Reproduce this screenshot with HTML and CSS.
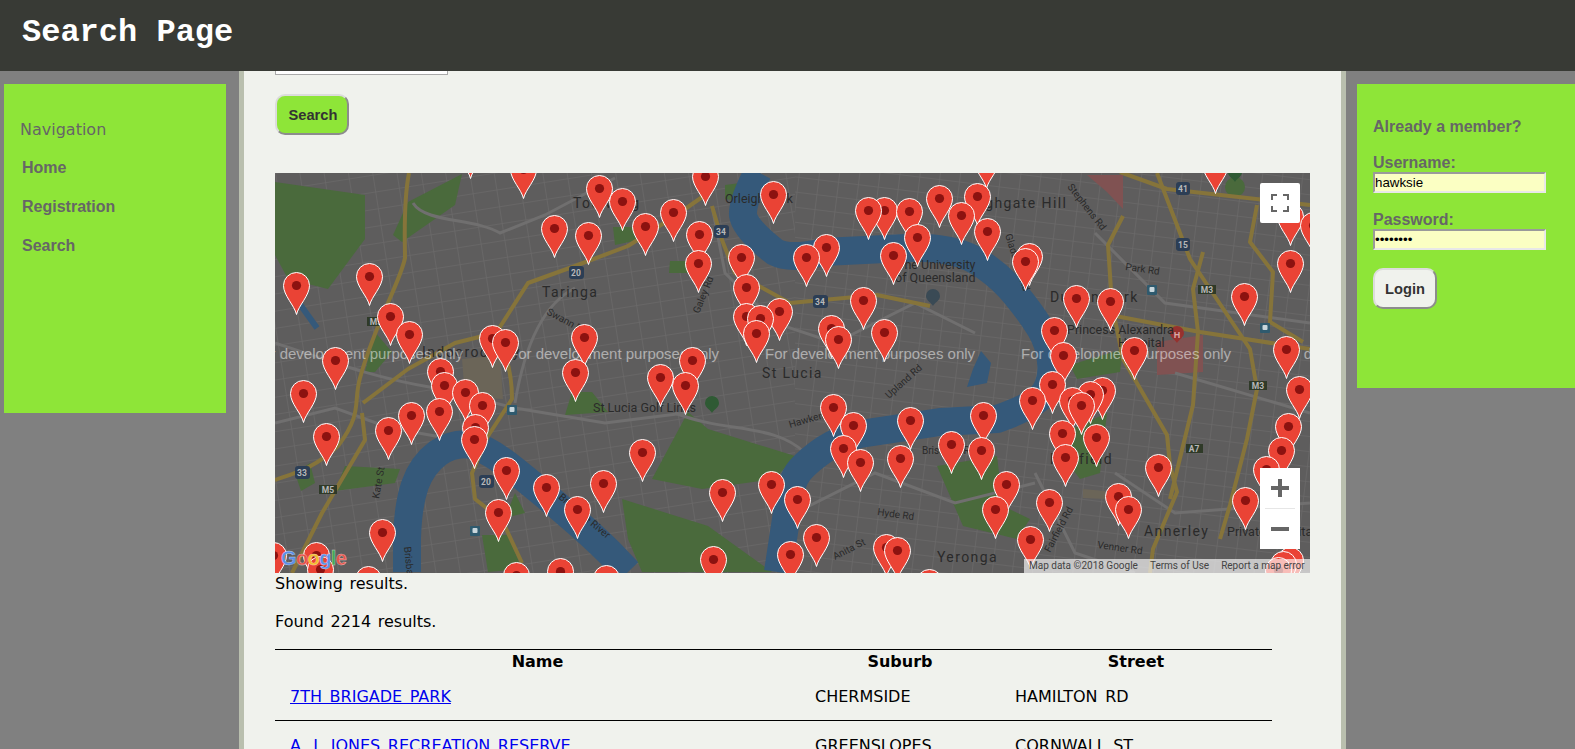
FILE: index.html
```html
<!DOCTYPE html>
<html lang="en">
<head>
    <meta charset="UTF-8">
    <meta name="viewport" content="width=device-width, initial-scale=1.0">
    <title>Search Page</title>
    <link rel="stylesheet" href="styles.css">
</head>
<body>
    <header class="site-header">
        <h1>Search Page</h1>
    </header>

    <div class="page">
        <aside class="side-left">
            <nav class="panel nav-panel">
                <h2>Navigation</h2>
                <a href="#">Home</a>
                <a href="#">Registration</a>
                <a href="#">Search</a>
            </nav>
        </aside>

        <main class="content">
            <div class="search-field"></div>
            <button class="btn btn-search">Search</button>

            <div class="map">
                <svg class="map-canvas" viewBox="0 0 1035 400" width="1035" height="400">
                    <defs>
                        <pattern id="streets-west" width="24" height="17" patternUnits="userSpaceOnUse" patternTransform="rotate(-9)">
                            <path class="street" d="M0,0H24M0,0V17"/>
                        </pattern>
                        <pattern id="streets-east" width="20" height="15" patternUnits="userSpaceOnUse" patternTransform="rotate(7)">
                            <path class="street" d="M0,0H20M0,0V15"/>
                        </pattern>
                        <g id="pin">
                            <path class="pin-body" d="M0,29C-2,20 -13,10 -13,0A13,13 0 0 1 13,0C13,10 2,20 0,29Z"/>
                            <circle class="pin-dot" r="4.6"/>
                        </g>
                        <g id="rail">
                            <rect class="rail" x="-5" y="-5" width="10" height="10" rx="1"/>
                            <rect class="rail-mark" x="-2.5" y="-3" width="5" height="5" rx="1"/>
                        </g>
                        <path id="poi" d="M0,9C-1,6 -7,4 -7,-1A7,7 0 0 1 7,-1C7,4 1,6 0,9Z"/>
                    </defs>

                    <rect class="land" width="1035" height="400"/>
                    <rect width="520" height="400" fill="url(#streets-west)"/>
                    <rect x="520" width="515" height="400" fill="url(#streets-east)"/>

                    <!-- parks -->
                    <path class="park" d="M0,9L90,22V66L53,116L13,106L0,82Z"/>
                    <path class="park" d="M133,29L187,1L180,32L127,69L118,62Z"/>
                    <path class="park" d="M100,159L117,179L100,199L90,199Z"/>
                    <path class="park" d="M290,242L297,219L317,219L333,239Z"/>
                    <path class="park" d="M413,239L377,306L427,316L500,306L520,283L433,256Z"/>
                    <path class="park" d="M347,326L433,353L497,399H367L353,366Z"/>
                    <path class="park" d="M207,362H233L247,396L213,399Z"/>
                    <path class="park" d="M662,293L722,283L728,333L755,346L742,366L688,353Z"/>
                    <path class="park" d="M795,192L848,176L845,199L802,206Z"/>
                    <path class="park" d="M775,266L832,240L825,300L805,306Z"/>
                    <path class="park" d="M338,54H362L368,66L340,72Z"/>
                    <path class="park" d="M395,88H430L425,100H394Z"/>
                    <path class="park" d="M20,300L35,290L40,310L26,318Z"/>
                    <path class="park" d="M70,293L125,296L120,310L60,318Z"/>
                    <path class="park" d="M240,320L250,340L230,345Z"/>
                    <path class="park" d="M450,12L480,8L478,30L450,26Z"/>
                    <circle class="park" cx="960" cy="14" r="10"/>
                    <path class="paved" d="M187,186L225,182L228,226L190,224Z"/>
                    <path class="paved" d="M808,316L830,318V326L808,325Z"/>

                    <!-- hospitals -->
                    <path class="hospital" d="M882,169L928,162V199L882,202Z"/>
                    <path class="hospital" d="M812,2H848V36L832,19Z"/>

                    <!-- minor roads -->
                    <path class="road" d="M138,30C150,50 200,45 225,60L270,42L340,5"/>
                    <path class="road" d="M0,170C60,190 100,205 160,215L240,235L330,250L410,240"/>
                    <path class="road" d="M240,230C250,170 270,130 300,115"/>
                    <path class="road" d="M0,250L60,235L115,255L200,270"/>
                    <path class="road" d="M437,33L450,100L500,150L560,170L640,130L700,160"/>
                    <path class="road" d="M760,300L800,380L860,400"/>
                    <path class="road" d="M520,340L600,300L680,330L760,310"/>
                    <path class="road" d="M820,60L890,130L1035,150"/>
                    <path class="road" d="M900,200L1035,240"/>
                    <path class="road" d="M400,240C450,260 500,250 530,280"/>
                    <path class="road" d="M840,300L900,340L1035,330"/>

                    <!-- river -->
                    <path class="river" d="M132,399L132,365Q133,332 140,312Q147,292 163,280Q180,269 196,272Q213,276 238,296Q263,316 290,339Q317,362 335,380L353,399"/>
                    <path class="river" d="M503,399L513,333Q515,309 525,297Q535,286 550,276Q565,266 585,261L665,249L722,246Q762,232 770,219Q778,206 776,189Q775,172 765,155Q755,139 741,122Q728,106 711,94Q695,82 675,78Q655,74 631,75L548,79Q515,87 500,79Q470,56 468,42Q467,29 483,-1"/>
                    <path class="lake" d="M706,178L716,190L712,210L692,214L698,196Z"/>
                    <path class="lake-thin" d="M24,130L42,155"/>

                    <!-- main roads -->
                    <g class="arterial">
                        <path d="M134,0C128,30 130,70 130,85C125,110 100,150 85,205C78,230 88,240 63,273C40,295 20,300 0,307"/>
                        <path d="M88,230L133,196L180,170L220,160C232,180 237,200 237,226L213,263L197,300L200,326L227,347L247,390"/>
                        <path d="M223,157L253,110L300,93L353,73L400,43L433,20L443,0"/>
                        <path d="M87,240L90,267L47,340L17,400"/>
                        <path d="M437,33L447,67L460,100L515,130L602,122L655,133"/>
                        <path d="M845,-1L892,16L1035,32"/>
                        <path d="M848,43L833,72L837,132L848,186L892,262L895,292L902,319L878,376L875,400"/>
                        <path d="M882,0L915,86L975,176L982,216L972,266L955,332L945,366"/>
                        <path d="M928,79L918,116L923,159L918,232L895,326"/>
                        <path d="M982,32L975,69L998,99L995,149L1028,169"/>
                        <path d="M835,142L925,159L1035,176"/>
                    </g>

                    <!-- road numbers -->
                    <g class="shield-text">
                        <rect class="shield" x="294" y="93" width="15" height="13" rx="3"/><text x="301" y="103">20</text>
                        <rect class="shield" x="439" y="52" width="15" height="13" rx="3"/><text x="446" y="62">34</text>
                        <rect class="shield" x="20" y="293" width="15" height="13" rx="3"/><text x="27" y="303">33</text>
                        <rect class="shield" x="204" y="302" width="15" height="13" rx="3"/><text x="211" y="312">20</text>
                        <rect class="shield" x="538" y="122" width="15" height="13" rx="3"/><text x="545" y="132">34</text>
                        <rect class="shield" x="901" y="65" width="14" height="13" rx="3"/><text x="908" y="75">15</text>
                        <rect class="shield" x="901" y="9" width="14" height="13" rx="3"/><text x="908" y="19">41</text>
                        <rect class="shield motorway" x="44" y="312" width="18" height="9"/><text x="53" y="320">M5</text>
                        <rect class="shield motorway" x="92" y="144" width="18" height="9"/><text x="101" y="152">M5</text>
                        <rect class="shield motorway" x="923" y="112" width="18" height="9"/><text x="932" y="120">M3</text>
                        <rect class="shield motorway" x="974" y="208" width="18" height="9"/><text x="983" y="216">M3</text>
                        <rect class="shield motorway" x="911" y="271" width="17" height="9"/><text x="919" y="279">A7</text>
                    </g>
                    <use href="#rail" x="237" y="237"/>
                    <use href="#rail" x="200" y="358"/>
                    <use href="#rail" x="877" y="117"/>
                    <use href="#rail" x="990" y="155"/>

                    <!-- points of interest -->
                    <use class="poi-park" href="#poi" x="437" y="231"/>
                    <use class="poi-school" href="#poi" x="658" y="124"/>
                    <use class="poi-hospital" href="#poi" x="902" y="161"/>
                    <use class="poi-park" href="#poi" x="960" y="0"/>
                    <text class="poi-letter" x="902" y="165">H</text>

                    <!-- place names -->
                    <g class="place">
                        <text x="298" y="35">Toowong</text>
                        <text x="267" y="124">Taringa</text>
                        <text x="147" y="184">Indooroopilly</text>
                        <text x="487" y="205">St Lucia</text>
                        <text x="662" y="389">Yeronga</text>
                        <text x="869" y="363">Annerley</text>
                        <text x="775" y="291">Fairfield</text>
                        <text x="775" y="129">Dutton Park</text>
                        <text x="694" y="35">Highgate Hill</text>
                    </g>
                    <g class="place-small">
                        <text x="318" y="239">St Lucia Golf Links</text>
                        <text x="450" y="30">Orleigh Park</text>
                        <text x="622" y="96">The University</text>
                        <text x="620" y="109">of Queensland</text>
                        <text x="792" y="161">Princess Alexandra</text>
                        <text x="843" y="174">Hospital</text>
                        <text x="952" y="363">Private Hospital</text>
                    </g>
                    <g class="road-name">
                        <text x="271" y="141" transform="rotate(28 271 141)">Swann Rd</text>
                        <text x="424" y="141" transform="rotate(-68 424 141)">Galey Rd</text>
                        <text x="104" y="326" transform="rotate(-80 104 326)">Kate St</text>
                        <text x="614" y="226" transform="rotate(-42 614 226)">Upland Rd</text>
                        <text x="602" y="342" transform="rotate(8 602 342)">Hyde Rd</text>
                        <text x="822" y="375" transform="rotate(8 822 375)">Venner Rd</text>
                        <text x="850" y="97" transform="rotate(8 850 97)">Park Rd</text>
                        <text x="792" y="14" transform="rotate(52 792 14)">Stephens Rd</text>
                        <text x="730" y="62" transform="rotate(72 730 62)">Gladstone Rd</text>
                        <text x="560" y="387" transform="rotate(-27 560 387)">Anita St</text>
                        <text x="775" y="380" transform="rotate(-62 775 380)">Fairfield Rd</text>
                        <text x="515" y="255" transform="rotate(-16 515 255)">Hawken Dr</text>
                        <text x="647" y="281">Brisbane River</text>
                        <text x="129" y="374" transform="rotate(84 129 374)">Brisbane</text>
                        <text x="283" y="325" transform="rotate(40 283 325)">Brisbane River</text>
                    </g>

                    <!-- watermark repeats every 256px -->
                    <g class="watermark">
                        <text x="-22" y="186">For development purposes only</text>
                        <text x="234" y="186">For development purposes only</text>
                        <text x="490" y="186">For development purposes only</text>
                        <text x="746" y="186">For development purposes only</text>
                        <text x="1002" y="186">For development purposes only</text>
                    </g>

                    <!-- markers, sorted top to bottom -->
                    <g class="markers">
                    <use href="#pin" x="195" y="-24"/><use href="#pin" x="711" y="-14"/><use href="#pin" x="940" y="-9"/><use href="#pin" x="248" y="-4"/>
                    <use href="#pin" x="430" y="3"/><use href="#pin" x="324" y="15"/><use href="#pin" x="498" y="21"/><use href="#pin" x="702" y="23"/>
                    <use href="#pin" x="664" y="25"/><use href="#pin" x="347" y="28"/><use href="#pin" x="609" y="37"/><use href="#pin" x="593" y="37"/>
                    <use href="#pin" x="634" y="38"/><use href="#pin" x="398" y="39"/><use href="#pin" x="686" y="42"/><use href="#pin" x="1015" y="43"/>
                    <use href="#pin" x="1038" y="52"/><use href="#pin" x="370" y="53"/><use href="#pin" x="279" y="55"/><use href="#pin" x="712" y="58"/>
                    <use href="#pin" x="424" y="61"/><use href="#pin" x="313" y="62"/><use href="#pin" x="642" y="64"/><use href="#pin" x="551" y="74"/>
                    <use href="#pin" x="618" y="82"/><use href="#pin" x="754" y="83"/><use href="#pin" x="466" y="84"/><use href="#pin" x="531" y="84"/>
                    <use href="#pin" x="750" y="88"/><use href="#pin" x="423" y="90"/><use href="#pin" x="1015" y="90"/><use href="#pin" x="94" y="103"/>
                    <use href="#pin" x="21" y="112"/><use href="#pin" x="471" y="114"/><use href="#pin" x="969" y="123"/><use href="#pin" x="801" y="125"/>
                    <use href="#pin" x="588" y="127"/><use href="#pin" x="835" y="128"/><use href="#pin" x="504" y="138"/><use href="#pin" x="115" y="143"/>
                    <use href="#pin" x="471" y="143"/><use href="#pin" x="485" y="145"/><use href="#pin" x="556" y="155"/><use href="#pin" x="779" y="157"/>
                    <use href="#pin" x="609" y="159"/><use href="#pin" x="481" y="160"/><use href="#pin" x="134" y="161"/><use href="#pin" x="309" y="164"/>
                    <use href="#pin" x="217" y="165"/><use href="#pin" x="563" y="166"/><use href="#pin" x="230" y="169"/><use href="#pin" x="1011" y="176"/>
                    <use href="#pin" x="859" y="177"/><use href="#pin" x="788" y="182"/><use href="#pin" x="60" y="187"/><use href="#pin" x="417" y="187"/>
                    <use href="#pin" x="165" y="198"/><use href="#pin" x="300" y="199"/><use href="#pin" x="385" y="204"/><use href="#pin" x="777" y="211"/>
                    <use href="#pin" x="169" y="212"/><use href="#pin" x="410" y="212"/><use href="#pin" x="1024" y="216"/><use href="#pin" x="827" y="217"/>
                    <use href="#pin" x="190" y="219"/><use href="#pin" x="28" y="220"/><use href="#pin" x="815" y="221"/><use href="#pin" x="757" y="227"/>
                    <use href="#pin" x="797" y="227"/><use href="#pin" x="207" y="232"/><use href="#pin" x="806" y="232"/><use href="#pin" x="558" y="234"/>
                    <use href="#pin" x="164" y="238"/><use href="#pin" x="136" y="242"/><use href="#pin" x="708" y="242"/><use href="#pin" x="635" y="247"/>
                    <use href="#pin" x="578" y="252"/><use href="#pin" x="1013" y="253"/><use href="#pin" x="200" y="254"/><use href="#pin" x="113" y="257"/>
                    <use href="#pin" x="787" y="260"/><use href="#pin" x="51" y="263"/><use href="#pin" x="821" y="264"/><use href="#pin" x="199" y="266"/>
                    <use href="#pin" x="676" y="271"/><use href="#pin" x="568" y="275"/><use href="#pin" x="706" y="277"/><use href="#pin" x="1006" y="277"/>
                    <use href="#pin" x="367" y="279"/><use href="#pin" x="790" y="284"/><use href="#pin" x="625" y="285"/><use href="#pin" x="585" y="289"/>
                    <use href="#pin" x="883" y="294"/><use href="#pin" x="991" y="296"/><use href="#pin" x="231" y="297"/><use href="#pin" x="328" y="310"/>
                    <use href="#pin" x="496" y="311"/><use href="#pin" x="731" y="311"/><use href="#pin" x="271" y="314"/><use href="#pin" x="447" y="319"/>
                    <use href="#pin" x="843" y="323"/><use href="#pin" x="522" y="326"/><use href="#pin" x="970" y="327"/><use href="#pin" x="774" y="329"/>
                    <use href="#pin" x="302" y="336"/><use href="#pin" x="720" y="336"/><use href="#pin" x="853" y="336"/><use href="#pin" x="223" y="339"/>
                    <use href="#pin" x="107" y="359"/><use href="#pin" x="541" y="364"/><use href="#pin" x="755" y="366"/><use href="#pin" x="611" y="374"/>
                    <use href="#pin" x="622" y="377"/><use href="#pin" x="515" y="381"/><use href="#pin" x="-2" y="382"/><use href="#pin" x="41" y="382"/>
                    <use href="#pin" x="438" y="386"/><use href="#pin" x="1015" y="387"/><use href="#pin" x="1008" y="391"/><use href="#pin" x="45" y="396"/>
                    <use href="#pin" x="1003" y="397"/><use href="#pin" x="285" y="398"/><use href="#pin" x="241" y="402"/><use href="#pin" x="331" y="405"/>
                    <use href="#pin" x="93" y="406"/><use href="#pin" x="654" y="409"/>
                    </g>
                </svg>

                <div class="map-logo"><span class="g-blue">G</span><span class="g-red">o</span><span class="g-yellow">o</span><span class="g-blue">g</span><span class="g-green">l</span><span class="g-red">e</span></div>

                <div class="map-attrib">
                    <span>Map data ©2018 Google</span>
                    <span>Terms of Use</span>
                    <span>Report a map error</span>
                </div>

                <button class="map-btn map-fullscreen" aria-label="Fullscreen">
                    <svg width="18" height="18" viewBox="0 0 18 18"><path class="ctrl-line" d="M1,6V1H6M12,1H17V6M17,12V17H12M6,17H1V12"/></svg>
                </button>
                <div class="map-zoom">
                    <button class="map-btn" aria-label="Zoom in">
                        <svg width="18" height="18" viewBox="0 0 18 18"><path class="ctrl-bar" d="M0,9H18M9,0V18"/></svg>
                    </button>
                    <div class="zoom-sep"></div>
                    <button class="map-btn" aria-label="Zoom out">
                        <svg width="18" height="18" viewBox="0 0 18 18"><path class="ctrl-bar" d="M0,9H18"/></svg>
                    </button>
                </div>
            </div>

            <p>Showing results.</p>
            <p>Found 2214 results.</p>

            <table class="results">
                <thead>
                    <tr>
                        <th class="col-name">Name</th>
                        <th class="col-suburb">Suburb</th>
                        <th class="col-street">Street</th>
                    </tr>
                </thead>
                <tbody>
                    <tr>
                        <td><a href="#">7TH BRIGADE PARK</a></td>
                        <td>CHERMSIDE</td>
                        <td>HAMILTON RD</td>
                    </tr>
                    <tr>
                        <td><a href="#">A. J. JONES RECREATION RESERVE</a></td>
                        <td>GREENSLOPES</td>
                        <td>CORNWALL ST</td>
                    </tr>
                </tbody>
            </table>
        </main>

        <aside class="side-right">
            <form class="panel login-panel">
                <h3>Already a member?</h3>
                <label for="username">Username:</label>
                <input id="username" type="text" value="hawksie">
                <label for="password">Password:</label>
                <input id="password" type="password" value="password">
                <button type="button" class="btn btn-login">Login</button>
            </form>
        </aside>
    </div>
</body>
</html>
```

FILE: styles.css
```css
:root {
    --green: #8ee538;
    --panel-text: #666666;
    --paper: #f0f2ed;
}

* {
    margin: 0;
    padding: 0;
    box-sizing: border-box;
}

html, body {
    height: 749px;
    overflow: hidden;
}

body {
    background: #808080;
    font-family: "DejaVu Sans", Verdana, sans-serif;
    font-size: 16px;
    color: #000;
}

.site-header {
    height: 71px;
    background: #383a35;
    padding: 15px 22px 0;
}

.site-header h1 {
    font-family: "Liberation Mono", "Courier New", monospace;
    font-size: 32px;
    line-height: 36px;
    font-weight: bold;
    color: #fff;
}

.page {
    display: flex;
    height: 678px;
}

.side-left {
    width: 239px;
    padding: 13px 13px 0 4px;
}

.side-right {
    flex: 1;
    padding: 13px 0 0 11px;
}

.panel {
    background: var(--green);
    color: var(--panel-text);
    font-family: "Liberation Sans", Arial, sans-serif;
    font-weight: bold;
}

.nav-panel {
    height: 329px;
    padding: 36px 16px 0;
}

.nav-panel h2 {
    font-family: "DejaVu Sans", Verdana, sans-serif;
    font-size: 16px;
    line-height: 20px;
    font-weight: normal;
    margin-bottom: 8px;
}

.nav-panel a {
    display: block;
    padding-left: 2px;
    line-height: 39px;
    color: var(--panel-text);
    text-decoration: none;
}

.login-panel {
    height: 304px;
    padding: 34px 16px 0;
}

.login-panel h3 {
    font-size: 16px;
    line-height: 18px;
    margin-bottom: 18px;
}

.login-panel label {
    display: block;
    line-height: 18px;
}

.login-panel input {
    display: block;
    width: 173px;
    height: 21px;
    margin-bottom: 18px;
    padding: 0;
    border: 2px solid;
    border-color: #9a9a9a #e8e8e8 #e8e8e8 #9a9a9a;
    background: #fbffc3;
    font-family: "Liberation Sans", Arial, sans-serif;
    font-size: 13.33px;
    color: #000;
}

.btn {
    display: block;
    height: 41px;
    border: 2px solid;
    border-color: #dcdcdc #8c8c8c #8c8c8c #dcdcdc;
    border-radius: 10px;
    font-family: "Liberation Sans", Arial, sans-serif;
    font-size: 14.67px;
    font-weight: bold;
    color: #333;
}

.btn-login {
    width: 64px;
    background: var(--paper);
}

.btn-search {
    width: 74px;
    margin-top: 19px;
    margin-bottom: 38px;
    padding-left: 2px;
    background: var(--green);
}

.content {
    width: 1107px;
    background: var(--paper);
    border-left: 5px solid #b9bfae;
    border-right: 5px solid #b9bfae;
    padding-left: 31px;
    overflow: hidden;
}

.search-field {
    width: 173px;
    height: 4px;
    background: #fff;
    border: 1px solid #a9a9a9;
    border-top: 0;
}

.content p {
    line-height: 21px;
    margin-bottom: 17px;
    word-spacing: 1.5px;
}

/* map */
.map {
    position: relative;
    width: 1035px;
    height: 400px;
    overflow: hidden;
}

.map-canvas {
    display: block;
}

.land { fill: #5e5d5d; }
.street { fill: none; stroke: #6a6969; stroke-width: 1.6; }
.park { fill: #4a6a3c; }
.paved { fill: #6b6558; }
.hospital { fill: #805252; }
.road { fill: none; stroke: #706f6f; stroke-width: 3; }
.river { fill: none; stroke: #35597a; stroke-width: 28; stroke-linejoin: round; }
.lake { fill: #35597a; }
.lake-thin { stroke: #35597a; stroke-width: 6; }
.arterial path { fill: none; stroke: #86743a; stroke-width: 4; stroke-linejoin: round; }
.markers { transform: translate(0.5px, 0.5px); }
.pin-body { fill: #ea4335; stroke: #fff; stroke-width: 1; }
.pin-dot { fill: #8c1210; }
.rail { fill: #2f5a6e; }
.rail-mark { fill: #c8d6dc; }
.shield { fill: #2c3e55; }
.motorway { fill: #2f3a28; }
.poi-park { fill: #2f5a34; }
.poi-school { fill: #3a4a55; }
.poi-hospital { fill: #96312e; }

.poi-letter {
    font-family: "Liberation Sans", Arial, sans-serif;
    font-size: 9px;
    font-weight: bold;
    text-anchor: middle;
    fill: #d8a8a8;
}

.shield-text text {
    font-family: Roboto, sans-serif;
    font-size: 8.5px;
    font-weight: bold;
    text-anchor: middle;
    fill: #b8b8b8;
}

.place text {
    font-family: Roboto, sans-serif;
    font-size: 14px;
    letter-spacing: 1.4px;
    fill: #2a2a2a;
}

.place-small text {
    font-family: Roboto, sans-serif;
    font-size: 12.5px;
    fill: #2a2a2a;
}

.road-name text {
    font-family: Roboto, sans-serif;
    font-size: 10px;
    fill: #2a2a2a;
}

.watermark text {
    font-family: "Liberation Sans", Arial, sans-serif;
    font-size: 15px;
    fill: rgba(255, 255, 255, 0.5);
}

.map-logo {
    position: absolute;
    left: 6px;
    bottom: 4px;
    font-family: "Liberation Sans", Arial, sans-serif;
    font-size: 20px;
    line-height: 22px;
    font-weight: bold;
    letter-spacing: -0.6px;
    -webkit-text-stroke: 0.4px rgba(255, 255, 255, 0.6);
}

.g-blue { color: #5a8fe8; }
.g-red { color: #e5524a; }
.g-yellow { color: #f1bc2c; }
.g-green { color: #45a858; }

.map-attrib {
    position: absolute;
    right: 0;
    bottom: 0;
    width: 286px;
    height: 14px;
    padding-left: 5px;
    display: flex;
    gap: 12px;
    background: rgba(255, 255, 255, 0.65);
    font-family: Roboto, sans-serif;
    font-size: 10px;
    line-height: 14px;
    color: #444;
}

.map-btn {
    display: flex;
    align-items: center;
    justify-content: center;
    width: 40px;
    height: 40px;
    background: #fff;
    border: 0;
}

.map-fullscreen {
    position: absolute;
    top: 10px;
    right: 10px;
    border-radius: 2px;
}

.map-zoom {
    position: absolute;
    right: 10px;
    bottom: 24px;
    width: 40px;
    background: #fff;
    border-radius: 2px;
}

.zoom-sep {
    height: 1px;
    margin: 0 5px;
    background: #e6e6e6;
}

.ctrl-line { fill: none; stroke: #666; stroke-width: 2; }
.ctrl-bar { fill: none; stroke: #666; stroke-width: 4; }

/* results */
.results {
    width: 997px;
    margin-top: 17px;
    border-collapse: collapse;
    border-top: 1px solid #000;
    table-layout: fixed;
}

.results th {
    height: 22px;
    padding-top: 2px;
    line-height: 20px;
    font-weight: bold;
}

.results td {
    padding: 15px 15px 13px;
    line-height: 20px;
    border-bottom: 1px solid #000;
    word-spacing: 2.5px;
}

.col-name { width: 525px; }
.col-suburb { width: 200px; }

.results a {
    color: #0000ee;
}
```
